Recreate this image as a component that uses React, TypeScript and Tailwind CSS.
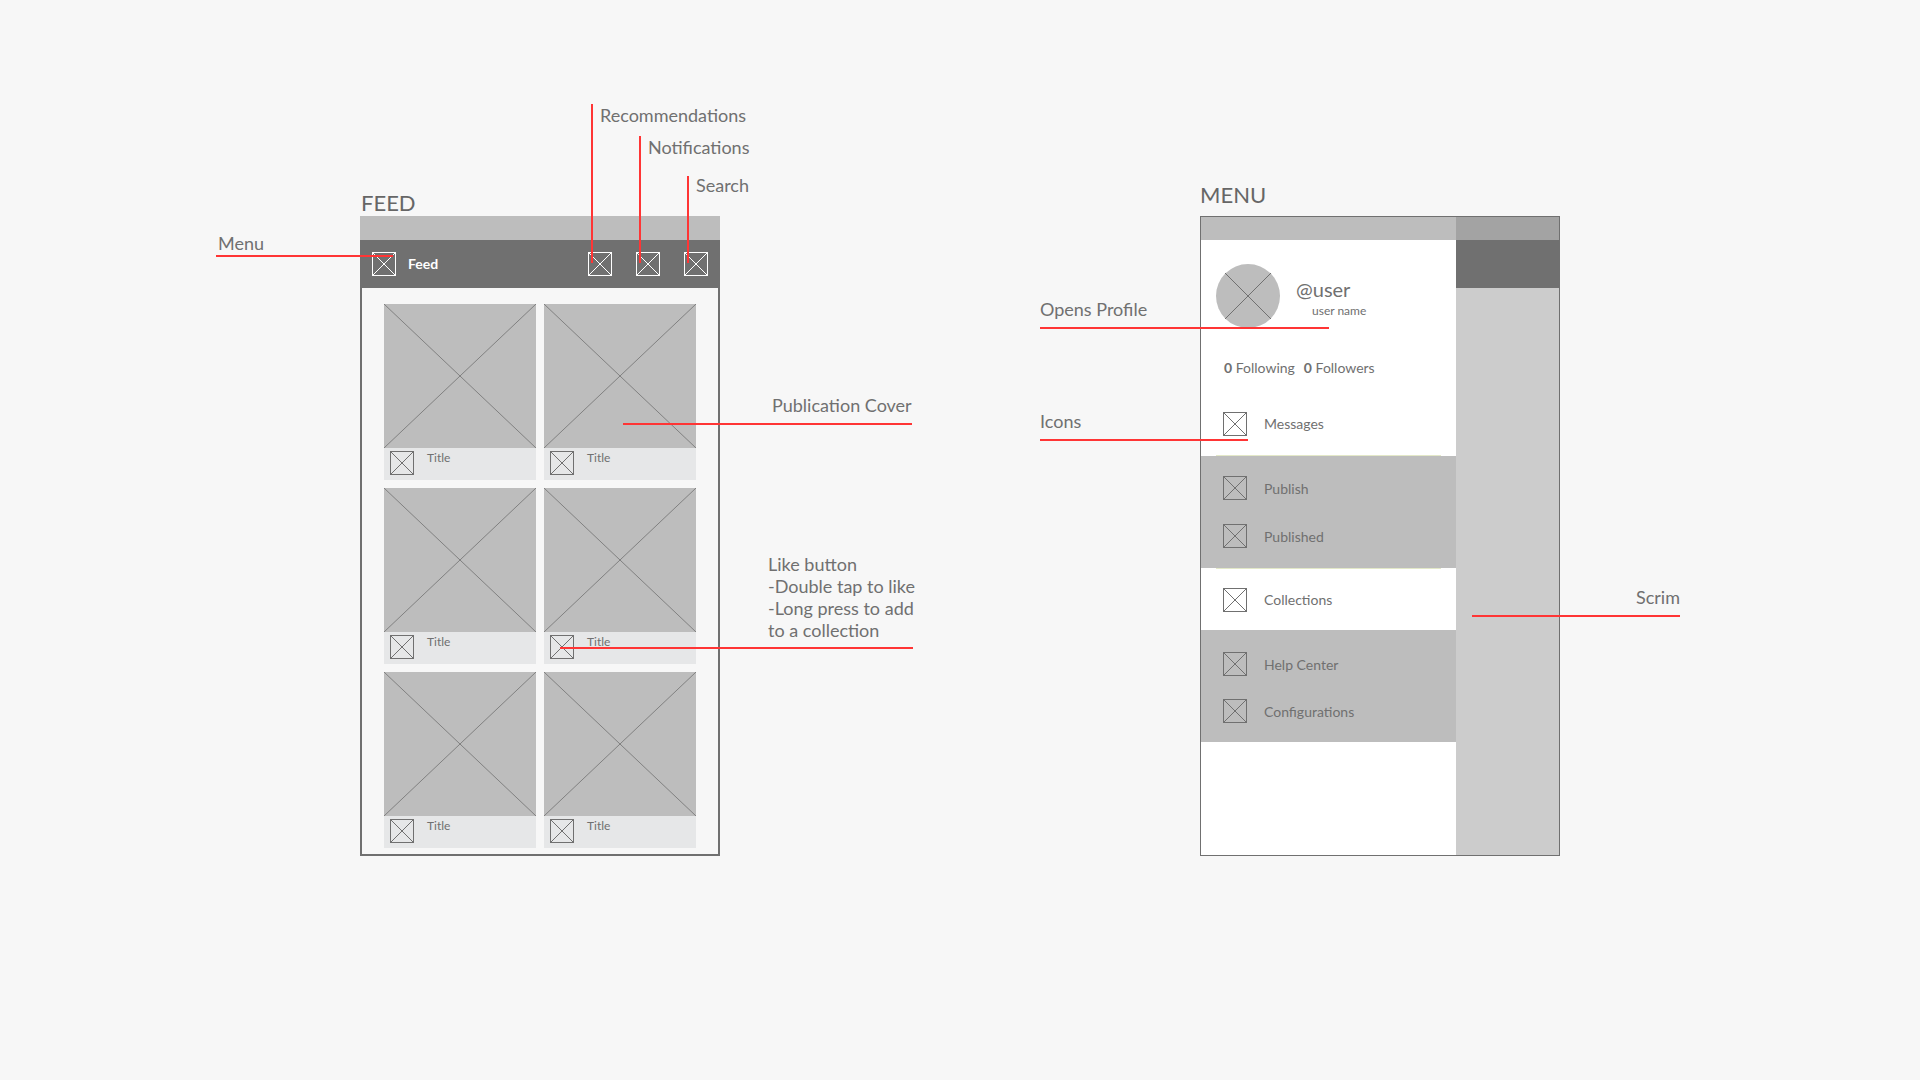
import React from 'react';

const Cross: React.FC<{ className?: string; stroke: string }> = ({ className, stroke }) => (
    <svg className={className} viewBox="0 0 100 100" preserveAspectRatio="none">
        <path d="M0 0L100 100M100 0L0 100" fill="none" stroke={stroke} strokeWidth="1" vectorEffect="non-scaling-stroke" />
    </svg>
);

const IconBox: React.FC<{ light?: boolean }> = ({ light }) => (
    <div className={`w-6 h-6 shrink-0 border ${light ? 'border-white' : 'border-[#707070]'}`}>
        <Cross className="w-full h-full block" stroke={light ? '#ffffff' : '#707070'} />
    </div>
);

const FeedCard: React.FC = () => (
    <div className="w-[152px]">
        <div className="h-36 bg-[#bdbdbd]">
            <Cross className="w-full h-full block" stroke="#808080" />
        </div>
        <div className="h-8 bg-[#e6e7e8] flex pl-1.5 pt-[3px] gap-[13px]">
            <IconBox />
            <span className="text-xs leading-[13px] text-[#707070]">Title</span>
        </div>
    </div>
);

const MenuItem: React.FC<{ label: string; active?: boolean }> = ({ label, active }) => (
    <div className="flex items-center gap-[17px] pl-[22px] h-6">
        <IconBox />
        <span className={`text-sm text-[#707070] ${active ? '' : 'pt-0.5'}`}>{label}</span>
    </div>
);

const FeedScreen: React.FC = () => (
    <div className="w-[360px]">
        <h2 className="text-[22px] leading-[26px] pl-px text-[#666666]">FEED</h2>
        <div className="h-6 bg-[#bdbdbd]"></div>
        <div className="h-12 bg-[#707070] flex items-center px-3">
            <IconBox light />
            <span className="ml-3 text-sm font-bold text-white">Feed</span>
            <div className="ml-auto flex gap-6">
                <IconBox light />
                <IconBox light />
                <IconBox light />
            </div>
        </div>
        <div className="h-[568px] border-x-2 border-b-2 border-[#707070] pt-4 pl-[22px]">
            <div className="grid grid-cols-[152px_152px] gap-2">
                {[0, 1, 2, 3, 4, 5].map((i) => (
                    <FeedCard key={i} />
                ))}
            </div>
        </div>
    </div>
);

const MenuScreen: React.FC = () => (
    <div className="w-[360px]">
        <h2 className="text-[22px] leading-[26px] mb-2 text-[#666666]">MENU</h2>
        <div className="h-[640px] border border-[#707070] flex">
            <div className="w-[255px] bg-white">
                <div className="h-[23px] bg-[#bdbdbd]"></div>
                <div className="h-[216px] relative">
                    <div className="flex pt-6 pl-[15px]">
                        <div className="w-16 h-16 rounded-full bg-[#bdbdbd] p-[9px]">
                            <Cross className="w-full h-full block" stroke="#707070" />
                        </div>
                        <div className="pl-4 pt-[13px]">
                            <div className="text-xl leading-6 text-[#707070]">@user</div>
                            <div className="text-xs leading-4 pt-0.5 pl-4 text-[#707070]">user name</div>
                        </div>
                    </div>
                    <div className="pl-[23px] pt-[30px] text-sm leading-5 text-[#707070] flex gap-[9px]">
                        <span>
                            <span className="font-bold">0</span> Following
                        </span>
                        <span>
                            <span className="font-bold">0</span> Followers
                        </span>
                    </div>
                    <div className="mt-[34px]">
                        <MenuItem label="Messages" active />
                    </div>
                    <div className="mt-[19px] mx-[15px] h-px bg-[#e3e8c8]"></div>
                </div>
                <div className="h-28 bg-[#bdbdbd] pt-5 flex flex-col gap-6">
                    <MenuItem label="Publish" />
                    <MenuItem label="Published" />
                </div>
                <div className="h-[62px]">
                    <div className="mx-[15px] h-px bg-[#e3e8c8] mb-[19px]"></div>
                    <MenuItem label="Collections" active />
                </div>
                <div className="h-28 bg-[#bdbdbd] pt-[22px] flex flex-col gap-[23px]">
                    <MenuItem label="Help Center" />
                    <MenuItem label="Configurations" />
                </div>
            </div>
            <div className="flex-1 bg-[#cccccc]">
                <div className="h-[23px] bg-[#a3a3a3]"></div>
                <div className="h-12 bg-[#707070]"></div>
            </div>
        </div>
    </div>
);

// callouts sit on top of the two screens, so they are placed on the canvas
const Annotations: React.FC = () => (
    <div className="absolute inset-0 text-[18px] leading-[22px] text-[#707070]">
        <span className="absolute left-[600px] top-[104px]">Recommendations</span>
        <span className="absolute left-[648px] top-[136px]">Notifications</span>
        <span className="absolute left-[696px] top-[174px]">Search</span>
        <span className="absolute left-[218px] top-[232px]">Menu</span>
        <span className="absolute left-[772px] top-[394px]">Publication Cover</span>
        <div className="absolute left-[768px] top-[553px]">
            Like button
            <br />
            -Double tap to like
            <br />
            -Long press to add
            <br />
            to a collection
        </div>
        <span className="absolute left-[1040px] top-[298px]">Opens Profile</span>
        <span className="absolute left-[1040px] top-[410px]">Icons</span>
        <span className="absolute right-[240px] top-[586px]">Scrim</span>

        <div className="absolute left-[591px] top-[104px] w-0.5 h-[159px] bg-[#ff3535]"></div>
        <div className="absolute left-[639px] top-[136px] w-0.5 h-[127px] bg-[#ff3535]"></div>
        <div className="absolute left-[687px] top-[176px] w-0.5 h-[87px] bg-[#ff3535]"></div>
        <div className="absolute left-[216px] top-[255px] w-[177px] h-0.5 bg-[#ff3535]"></div>
        <div className="absolute left-[623px] top-[423px] w-[289px] h-0.5 bg-[#ff3535]"></div>
        <div className="absolute left-[560px] top-[647px] w-[353px] h-0.5 bg-[#ff3535]"></div>
        <div className="absolute left-[1040px] top-[327px] w-[289px] h-0.5 bg-[#ff3535]"></div>
        <div className="absolute left-[1040px] top-[439px] w-[208px] h-0.5 bg-[#ff3535]"></div>
        <div className="absolute left-[1472px] top-[615px] w-[208px] h-0.5 bg-[#ff3535]"></div>
    </div>
);

const App: React.FC = () => (
    <div className="relative w-[1920px] h-[1080px] overflow-hidden bg-[#f7f7f7] font-['Lato',sans-serif]">
        <div className="flex items-end gap-[480px] pl-[360px] pt-[182px]">
            <FeedScreen />
            <MenuScreen />
        </div>
        <Annotations />
    </div>
);

export default App;
